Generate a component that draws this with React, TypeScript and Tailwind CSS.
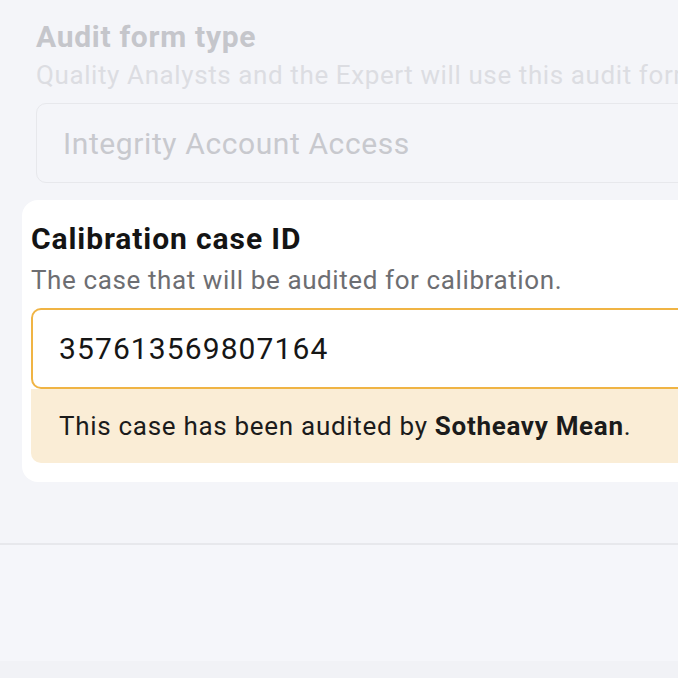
export default function App() {
  return (
    <div
      className="w-[678px] h-[678px] overflow-hidden bg-[#f4f5f9] flex flex-col"
      style={{ fontFamily: "Roboto, 'Noto Sans', sans-serif" }}
    >
      <div className="w-[760px] shrink-0">
        {/* disabled section */}
        <div className="pl-[36px] pt-[20px]">
          <h2 className="text-[30px] leading-[34px] font-bold tracking-[0.7px] text-[#c5c6cb]">Audit form type</h2>
          <p className="text-[26px] leading-[32px] mt-[5px] tracking-[0.6px] text-[#dcdde2] whitespace-nowrap">
            Quality Analysts and the Expert will use this audit form
          </p>
          <div className="mt-[12px] h-[80px] rounded-[10px] border border-[#e7e8ec] flex items-center pl-[26px]">
            <span className="text-[30px] tracking-[0.6px] text-[#c8c9ce]">Integrity Account Access</span>
          </div>
        </div>

        {/* active card */}
        <div className="ml-[22px] mt-[17px] bg-white rounded-[16px] pl-[9px] pt-[22px] pb-[19px]">
          <h2 className="text-[30px] leading-[34px] font-bold tracking-[0.9px] text-[#141414]">Calibration case ID</h2>
          <p className="text-[26px] leading-[32px] mt-[8px] tracking-[0.6px] text-[#6d6e72]">
            The case that will be audited for calibration.
          </p>
          <div className="mt-[12px]">
            <div className="h-[81px] rounded-[10px] border-2 border-[#f0b444] bg-white flex items-center pl-[26px]">
              <span className="text-[30px] tracking-[1.1px] text-[#161616]">357613569807164</span>
            </div>
            <div className="h-[74px] rounded-b-[10px] bg-[#faedd6] flex items-center pl-[28px]">
              <span className="text-[26px] tracking-[0.7px] text-[#1b1b1b]">
                This case has been audited by <span className="font-bold">Sotheavy Mean</span>.
              </span>
            </div>
          </div>
        </div>
      </div>

      <div className="h-[61px] shrink-0" />
      <div className="h-[2px] shrink-0 bg-[#e7e8ec]" />
      <div className="h-[116px] shrink-0 bg-[#f5f6fa]" />
      <div className="flex-1 bg-[#f1f2f6]" />
    </div>
  );
}
